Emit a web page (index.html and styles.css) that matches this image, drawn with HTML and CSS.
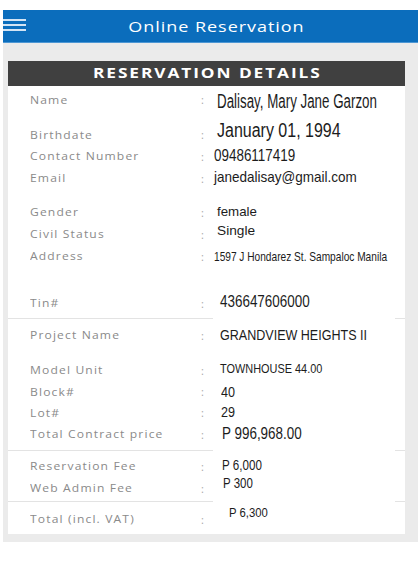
FILE: index.html
```html
<!DOCTYPE html>
<html lang="en">
<head>
<meta charset="utf-8">
<title>Online Reservation</title>
<link rel="stylesheet" href="styles.css">
</head>
<body>
<header class="topbar">
  <span class="burger"><i></i><i></i><i></i></span>
  <h1 class="title"><span class="title-text">Online Reservation</span></h1>
</header>
<main class="panel">
  <section class="card">
    <h2 class="card-head"><span class="head-text">RESERVATION DETAILS</span></h2>
    <div class="rows">
      <div class="row r-name"><span class="label">Name</span><span class="colon">:</span><span class="val v-name">Dalisay, Mary Jane Garzon</span></div>
      <div class="row r-birth"><span class="label">Birthdate</span><span class="colon">:</span><span class="val v-birth">January 01, 1994</span></div>
      <div class="row"><span class="label">Contact Number</span><span class="colon">:</span><span class="val v-contact">09486117419</span></div>
      <div class="row"><span class="label">Email</span><span class="colon">:</span><span class="val v-email">janedalisay@gmail.com</span></div>
      <div class="row r-gender"><span class="label">Gender</span><span class="colon">:</span><span class="val v-gender">female</span></div>
      <div class="row"><span class="label">Civil Status</span><span class="colon">:</span><span class="val v-civil">Single</span></div>
      <div class="row"><span class="label">Address</span><span class="colon">:</span><span class="val v-address">1597 J Hondarez St. Sampaloc Manila</span></div>
      <div class="row r-tin"><span class="label">Tin#</span><span class="colon">:</span><span class="val v-tin">436647606000</span></div>
      <div class="divider d1"></div>
      <div class="row r-project"><span class="label">Project Name</span><span class="colon">:</span><span class="val v-project">GRANDVIEW HEIGHTS II</span></div>
      <div class="row r-model"><span class="label">Model Unit</span><span class="colon">:</span><span class="val v-model">TOWNHOUSE 44.00</span></div>
      <div class="row r-block"><span class="label">Block#</span><span class="colon">:</span><span class="val v-block">40</span></div>
      <div class="row r-lot"><span class="label">Lot#</span><span class="colon">:</span><span class="val v-lot">29</span></div>
      <div class="row"><span class="label">Total Contract price</span><span class="colon">:</span><span class="val v-tcp">P 996,968.00</span></div>
      <div class="divider d2"></div>
      <div class="row r-res"><span class="label">Reservation Fee</span><span class="colon">:</span><span class="val v-res">P 6,000</span></div>
      <div class="row"><span class="label">Web Admin Fee</span><span class="colon">:</span><span class="val v-web">P 300</span></div>
      <div class="divider d3"></div>
      <div class="row r-vat"><span class="label">Total (incl. VAT)</span><span class="colon">:</span><span class="val v-vat">P 6,300</span></div>
    </div>
  </section>
</main>
</body>
</html>
```
FILE: styles.css
```css
html, body {
  margin: 0;
  padding: 0;
  background: #ffffff;
}
body {
  margin: 10px 0 0 3px;
  font-family: "Open Sans", "Liberation Sans", sans-serif;
}

.topbar {
  height: 32px;
  background: #0b6dbc;
  border-bottom: 1px solid #4d97d4;
  display: flex;
  align-items: center;
  position: relative;
}
.burger {
  position: absolute;
  left: 0;
  top: 9px;
  width: 23px;
  display: flex;
  flex-direction: column;
  gap: 3px;
}
.burger i {
  display: block;
  height: 2px;
  background: #d3e4f4;
}
.title {
  flex: 1;
  margin: 0;
  padding-left: 12px;
  text-align: center;
  color: #ffffff;
  font-weight: 400;
  font-size: 15px;
  letter-spacing: 0.8px;
}
.title-text,
.head-text {
  display: inline-block;
  transform-origin: center center;
}
.title-text { transform: scaleX(1.2); }

.panel {
  background: #ebebeb;
  padding: 18px 13px 8px 5px;
}
.card {
  background: #ffffff;
  padding-bottom: 4px;
}
.card-head {
  margin: 0;
  height: 25px;
  line-height: 25px;
  padding-left: 2px;
  background: #404040;
  color: #ffffff;
  text-align: center;
  font-size: 13.5px;
  font-weight: 700;
  letter-spacing: 1.5px;
}
.head-text { transform: scaleX(1.28); }
.rows {
  padding-top: 2px;
  display: flex;
  flex-direction: column;
}
.row {
  height: 22px;
  display: grid;
  grid-template-columns: 171px 13px 1fr;
  align-items: center;
  padding-left: 22px;
}
.label {
  justify-self: start;
  display: inline-block;
  font-size: 10.5px;
  color: #8a8a8a;
  letter-spacing: 1px;
  white-space: nowrap;
  transform: scaleX(1.15);
  transform-origin: left center;
}
.colon {
  font-size: 11px;
  color: #a8a8a8;
}
.val {
  display: inline-block;
  justify-self: start;
  white-space: nowrap;
  font-family: "Liberation Sans", Arial, sans-serif;
  color: #1c1c1c;
  transform-origin: left center;
  line-height: 1.15;
}

.r-birth { margin-top: 13px; }
.r-gender { margin-top: 12px; }
.r-tin { margin-top: 25px; }
.r-project { margin-top: 5px; }
.r-model { margin-top: 13px; }
.r-block { height: 21px; }
.r-lot { height: 21px; }
.r-res { margin-top: 4px; }
.r-vat { margin-top: 6px; }

.divider {
  height: 1px;
  background: linear-gradient(to right, #e3e3e3 205px, transparent 205px, transparent 387px, #e3e3e3 387px);
}
.d1 { margin-top: 4px; }
.d2 { margin-top: 5px; }
.d3 { margin-top: 2px; }

.v-name { margin-left: 3px; font-size: 20px; transform: translateY(1.5px) scaleX(0.667); }
.v-birth { margin-left: 3px; font-size: 20px; transform: translateY(-4.5px) scaleX(0.8); }
.v-contact { font-size: 16px; transform: scaleX(0.84); }
.v-email { font-size: 15px; transform: translateY(-1.5px) scaleX(0.9); }
.v-gender { margin-left: 3px; font-size: 13.3px; }
.v-civil { margin-left: 3px; font-size: 13.7px; transform: translateY(-3.5px); }
.v-address { font-size: 13px; transform: translateY(1px) scaleX(0.78); }
.v-tin { margin-left: 6px; font-size: 16px; transform: translateY(-1.5px) scaleX(0.84); }
.v-project { margin-left: 6px; font-size: 15px; transform: scaleX(0.836); }
.v-model { margin-left: 6px; font-size: 13px; transform: translateY(-1px) scaleX(0.84); }
.v-block { margin-left: 7px; font-size: 15px; transform: scaleX(0.84); }
.v-lot { margin-left: 7px; font-size: 15px; transform: translateY(-1.5px) scaleX(0.84); }
.v-tcp { margin-left: 8px; font-size: 16px; transform: scaleX(0.84); }
.v-res { margin-left: 8px; font-size: 14px; transform: translateY(-1px) scaleX(0.83); }
.v-web { margin-left: 9px; font-size: 14px; transform: translateY(-5.5px) scaleX(0.82); }
.v-vat { margin-left: 15px; font-size: 13px; transform: translateY(-6.5px) scaleX(0.87); }
```
